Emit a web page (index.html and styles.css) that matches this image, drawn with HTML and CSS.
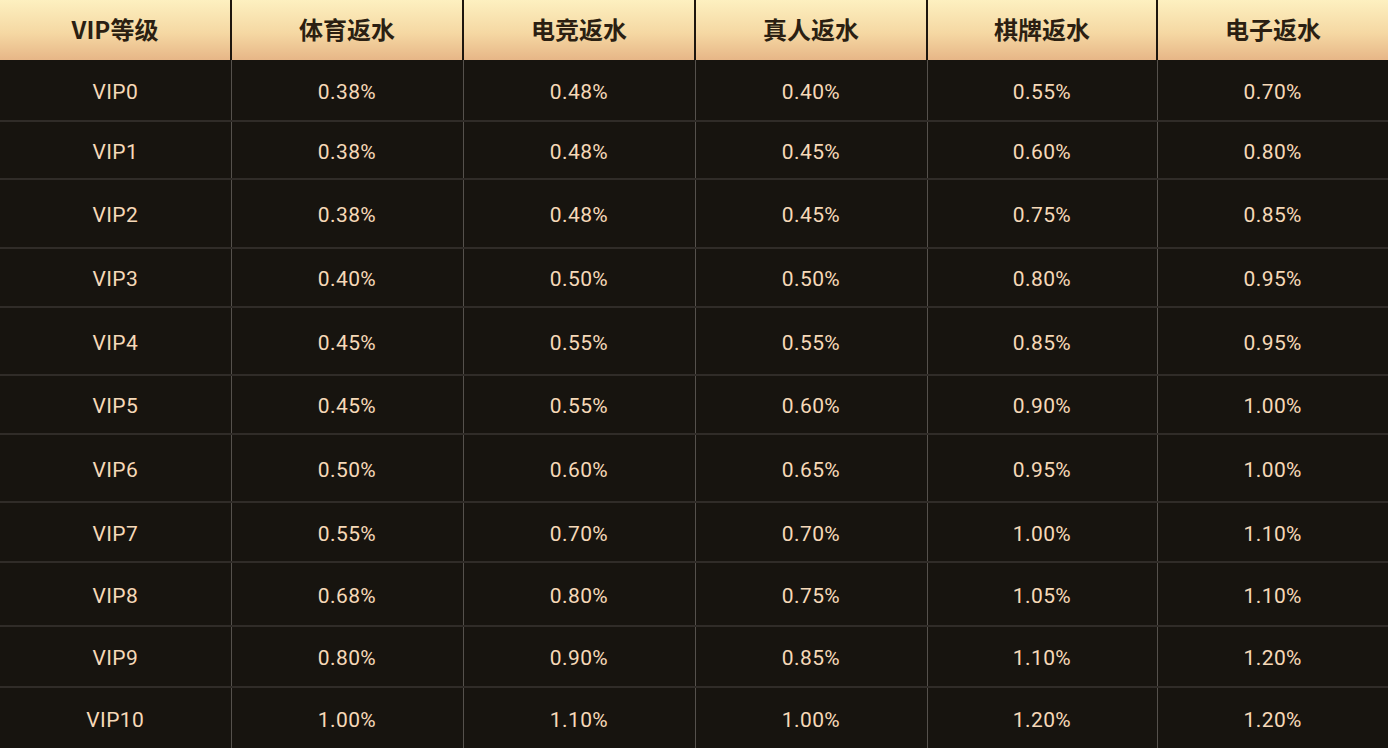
FILE: index.html
```
<!DOCTYPE html>
<html lang="zh">
<head>
<meta charset="utf-8">
<link rel="stylesheet" href="styles.css">
</head>
<body>
<table class="vip-table">
  <thead>
    <tr><th>VIP等级</th><th>体育返水</th><th>电竞返水</th><th>真人返水</th><th>棋牌返水</th><th>电子返水</th></tr>
  </thead>
  <tbody>
    <tr><td>VIP0</td><td>0.38%</td><td>0.48%</td><td>0.40%</td><td>0.55%</td><td>0.70%</td></tr>
    <tr><td>VIP1</td><td>0.38%</td><td>0.48%</td><td>0.45%</td><td>0.60%</td><td>0.80%</td></tr>
    <tr><td>VIP2</td><td>0.38%</td><td>0.48%</td><td>0.45%</td><td>0.75%</td><td>0.85%</td></tr>
    <tr><td>VIP3</td><td>0.40%</td><td>0.50%</td><td>0.50%</td><td>0.80%</td><td>0.95%</td></tr>
    <tr><td>VIP4</td><td>0.45%</td><td>0.55%</td><td>0.55%</td><td>0.85%</td><td>0.95%</td></tr>
    <tr><td>VIP5</td><td>0.45%</td><td>0.55%</td><td>0.60%</td><td>0.90%</td><td>1.00%</td></tr>
    <tr><td>VIP6</td><td>0.50%</td><td>0.60%</td><td>0.65%</td><td>0.95%</td><td>1.00%</td></tr>
    <tr><td>VIP7</td><td>0.55%</td><td>0.70%</td><td>0.70%</td><td>1.00%</td><td>1.10%</td></tr>
    <tr><td>VIP8</td><td>0.68%</td><td>0.80%</td><td>0.75%</td><td>1.05%</td><td>1.10%</td></tr>
    <tr><td>VIP9</td><td>0.80%</td><td>0.90%</td><td>0.85%</td><td>1.10%</td><td>1.20%</td></tr>
    <tr><td>VIP10</td><td>1.00%</td><td>1.10%</td><td>1.00%</td><td>1.20%</td><td>1.20%</td></tr>
  </tbody>
</table>
</body>
</html>
```
FILE: styles.css
```
html, body {
  margin: 0;
  padding: 0;
  background: #17140f;
  overflow: hidden;
}
.vip-table {
  width: 1388px;
  border-collapse: collapse;
  table-layout: fixed;
  font-family: Roboto, "Noto Sans CJK SC", sans-serif;
}
.vip-table th:nth-child(1), .vip-table td:nth-child(1) { width: 230px; }
.vip-table th:nth-child(2), .vip-table td:nth-child(2) { width: 230px; }
.vip-table th:nth-child(3), .vip-table td:nth-child(3) { width: 230px; }
.vip-table th:nth-child(4), .vip-table td:nth-child(4) { width: 230px; }
.vip-table th:nth-child(5), .vip-table td:nth-child(5) { width: 228px; }
.vip-table thead tr {
  height: 60px;
  background: linear-gradient(180deg, #fdf0c0 0%, #f5d8a3 55%, #e7b687 100%);
}
.vip-table th {
  padding: 0 0 3px 0;
  font-family: "Noto Sans CJK SC", Roboto, sans-serif;
  font-size: 24px;
  font-weight: 700;
  color: #2b1f12;
  text-align: center;
  vertical-align: middle;
  border-left: 2px solid #1e160e;
}
.vip-table th:first-child { border-left: none; }
.vip-table td {
  padding: 3px 0 0 0;
  font-size: 21px;
  letter-spacing: 0.4px;
  color: #f6d9b8;
  text-align: center;
  vertical-align: middle;
  border-left: 1px solid #55514c;
  border-top: 2px solid #302c28;
}
.vip-table td:first-child { border-left: none; }
.vip-table tbody tr:first-child td { border-top: none; }
.vip-table tbody tr:nth-child(1) { height: 61px; }
.vip-table tbody tr:nth-child(2) { height: 58px; }
.vip-table tbody tr:nth-child(3) { height: 69px; }
.vip-table tbody tr:nth-child(4) { height: 59px; }
.vip-table tbody tr:nth-child(5) { height: 68px; }
.vip-table tbody tr:nth-child(6) { height: 59px; }
.vip-table tbody tr:nth-child(7) { height: 68px; }
.vip-table tbody tr:nth-child(8) { height: 60px; }
.vip-table tbody tr:nth-child(9) { height: 64px; }
.vip-table tbody tr:nth-child(10) { height: 61px; }
.vip-table tbody tr:nth-child(11) { height: 61px; }
```
